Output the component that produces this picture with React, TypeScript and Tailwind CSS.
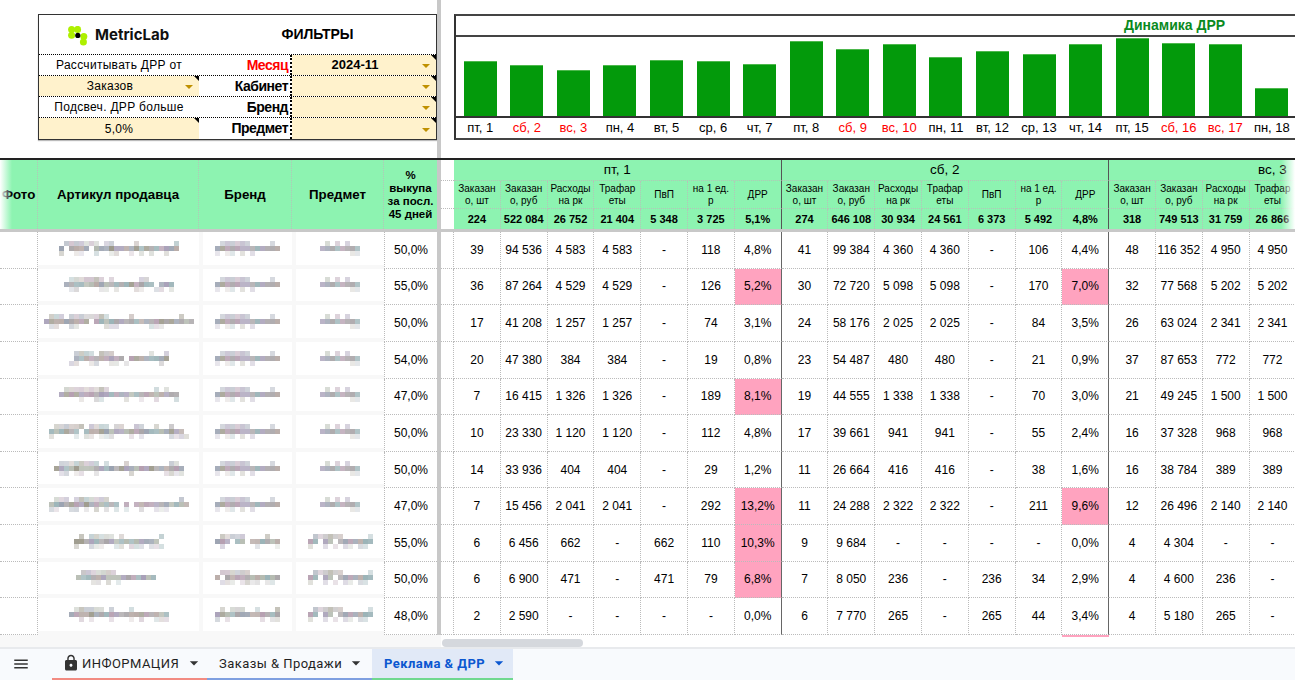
import React from "react";
import { MdArrowDropDown, MdLock, MdMenu } from "react-icons/md";

const DAY_LABELS = ["пт, 1", "сб, 2", "вс, 3", "пн, 4", "вт, 5", "ср, 6", "чт, 7", "пт, 8", "сб, 9", "вс, 10", "пн, 11", "вт, 12", "ср, 13", "чт, 14", "пт, 15", "сб, 16", "вс, 17", "пн, 18"];
const BAR_HEIGHTS = [55, 51, 46, 51, 56, 55, 52, 75, 67, 72, 59, 65, 62, 72, 78, 73, 72, 28];
const COL_TITLES = ["Заказан\nо, шт", "Заказан\nо, руб", "Расходы\nна рк", "Трафар\nеты", "ПвП", "на 1 ед.\nр", "ДРР"];

const DAY_1 = [
  ["39", "94 536", "4 583", "4 583", "-", "118", "4,8%"],
  ["36", "87 264", "4 529", "4 529", "-", "126", "5,2%"],
  ["17", "41 208", "1 257", "1 257", "-", "74", "3,1%"],
  ["20", "47 380", "384", "384", "-", "19", "0,8%"],
  ["7", "16 415", "1 326", "1 326", "-", "189", "8,1%"],
  ["10", "23 330", "1 120", "1 120", "-", "112", "4,8%"],
  ["14", "33 936", "404", "404", "-", "29", "1,2%"],
  ["7", "15 456", "2 041", "2 041", "-", "292", "13,2%"],
  ["6", "6 456", "662", "-", "662", "110", "10,3%"],
  ["6", "6 900", "471", "-", "471", "79", "6,8%"],
  ["2", "2 590", "-", "-", "-", "-", "0,0%"],
];
const DAY_2 = [
  ["41", "99 384", "4 360", "4 360", "-", "106", "4,4%"],
  ["30", "72 720", "5 098", "5 098", "-", "170", "7,0%"],
  ["24", "58 176", "2 025", "2 025", "-", "84", "3,5%"],
  ["23", "54 487", "480", "480", "-", "21", "0,9%"],
  ["19", "44 555", "1 338", "1 338", "-", "70", "3,0%"],
  ["17", "39 661", "941", "941", "-", "55", "2,4%"],
  ["11", "26 664", "416", "416", "-", "38", "1,6%"],
  ["11", "24 288", "2 322", "2 322", "-", "211", "9,6%"],
  ["9", "9 684", "-", "-", "-", "-", "0,0%"],
  ["7", "8 050", "236", "-", "236", "34", "2,9%"],
  ["6", "7 770", "265", "-", "265", "44", "3,4%"],
];
const DAY_3 = [
  ["48", "116 352", "4 950", "4 950"],
  ["32", "77 568", "5 202", "5 202"],
  ["26", "63 024", "2 341", "2 341"],
  ["37", "87 653", "772", "772"],
  ["21", "49 245", "1 500", "1 500"],
  ["16", "37 328", "968", "968"],
  ["16", "38 784", "389", "389"],
  ["12", "26 496", "2 140", "2 140"],
  ["4", "4 304", "-", "-"],
  ["4", "4 600", "236", "-"],
  ["4", "5 180", "265", "-"],
];
const TOTALS = [
  ["224", "522 084", "26 752", "21 404", "5 348", "3 725", "5,1%"],
  ["274", "646 108", "30 934", "24 561", "6 373", "5 492", "4,8%"],
  ["318", "749 513", "31 759", "26 866"],
];
const PERCENTS = ["50,0%", "55,0%", "50,0%", "54,0%", "47,0%", "50,0%", "50,0%", "47,0%", "55,0%", "50,0%", "48,0%"];
const ARTICLE_WIDTHS = [120, 110, 150, 100, 120, 140, 130, 140, 90, 85, 100];

const GRID = "grid grid-cols-[38px_161px_93px_92px_53px_4px_13px_repeat(25,46.8px)]";
const PALETTE = ["#a9a5a8", "#b9aca8", "#9d9a8c", "#a8a0b8", "#9cb4b8", "#b4bab0", "#b59fb0", "#9aa2b0"];

// blurred-out product names in the source: a pixel mosaic shaped like a line of text
function Mosaic({ width, seed }: { width: number; seed: number }) {
  const cols = Math.round(width / 5);
  const cells: React.ReactNode[] = [];
  let s = seed;
  const next = () => {
    s = (s * 16807) % 2147483647;
    return s / 2147483647;
  };
  const rowOpacity = [0.4, 0.78, 0.22];
  for (let y = 0; y < 3; y++) {
    for (let x = 0; x < cols; x++) {
      const hit = next();
      const tone = PALETTE[Math.floor(next() * PALETTE.length)];
      const shade = next() * 0.22;
      const skip = y === 1 ? 0.04 : y === 2 ? 0.55 : x / cols < 0.42 ? 0.12 : 0.85;
      if (hit < skip) continue;
      cells.push(<rect key={`${x}-${y}`} x={x * 5} y={y * 5} width={5} height={5} fill={tone} opacity={rowOpacity[y] + shade} />);
    }
  }
  return (
    <svg width={cols * 5} height={15} shapeRendering="crispEdges" className="block">
      {cells}
    </svg>
  );
}

function NoteMark() {
  return <span className="absolute right-0 top-0 border-l-[5px] border-t-[5px] border-l-transparent border-t-black" />;
}

function DropCaret() {
  return <span className="absolute right-[6px] top-1/2 -translate-y-[1px] border-x-[4px] border-t-[4px] border-x-transparent border-t-[#bf9000]" />;
}

function Logo() {
  return (
    <svg width="20" height="20" viewBox="0 0 20 20">
      <g fill="#aef000">
        <circle cx="3.6" cy="3.6" r="3.5" />
        <circle cx="9.6" cy="3.4" r="3.5" />
        <circle cx="3.6" cy="9.2" r="3.5" />
        <circle cx="15.8" cy="10.4" r="3.5" />
        <circle cx="15.4" cy="16" r="3.5" />
      </g>
      <circle cx="9.8" cy="9.4" r="2.6" fill="#000" />
    </svg>
  );
}

function FilterPanel() {
  return (
    <div className="ml-[38px] mt-[14px] h-[126px] w-[399px] border border-[#333] shadow-[0_1px_1px_#bbb] font-['Liberation_Sans',sans-serif] text-black">
      <div className="flex h-[40px] border-b border-dotted border-black">
        <div className="flex w-[160px] items-center gap-[7px] pl-[29px] pt-[2px]">
          <Logo />
          <span className="font-['Inter',sans-serif] text-[15px] font-bold text-[#111]">MetricLab</span>
        </div>
        <div className="flex flex-1 items-center justify-center text-[14px] font-bold">ФИЛЬТРЫ</div>
      </div>
      <FilterRow left="Рассчитывать ДРР от" label="Месяц" value="2024-11" red />
      <FilterRow left="Заказов" label="Кабинет" leftDrop />
      <FilterRow left="Подсвеч. ДРР больше" label="Бренд" />
      <FilterRow left="5,0%" label="Предмет" leftFill last />
    </div>
  );
}

function FilterRow({ left, label, value, red, leftDrop, leftFill, last }: { left: string; label: string; value?: string; red?: boolean; leftDrop?: boolean; leftFill?: boolean; last?: boolean }) {
  const filled = leftDrop || leftFill;
  return (
    <div className={last ? "flex h-[21px]" : "flex h-[21px] border-b border-dotted border-black"}>
      <div className={`relative flex w-[160px] items-center justify-center text-[12px] tracking-[0.3px] ${filled ? "bg-[#fff2cc]" : ""} ${leftDrop ? "pr-[18px]" : ""}`}>
        {left}
        {filled && <NoteMark />}
        {leftDrop && <DropCaret />}
      </div>
      <div className={red ? "flex w-[93px] items-center justify-end border-r-2 border-dotted border-black pr-[2px] text-[14px] font-bold tracking-[-0.5px] text-[#ff0000]" : "flex w-[93px] items-center justify-end border-r-2 border-dotted border-black pr-[2px] text-[14px] font-bold tracking-[-0.5px]"}>
        {label}
      </div>
      <div className="relative flex flex-1 items-center justify-center bg-[#fff2cc] pr-[18px] text-[13px] font-bold">
        {value}
        <NoteMark />
        <DropCaret />
      </div>
    </div>
  );
}

function DynamicsChart() {
  return (
    <div className="mt-[14px] h-[126px] flex-1 border-y-2 border-l-2 border-y-[#444] border-l-[#333] font-['Liberation_Sans',sans-serif]">
      <div className="h-[21px] border-b-2 border-[#444] pl-[668px] text-[14px] font-bold leading-[19px] text-[#0a8a1e]">Динамика ДРР</div>
      <div className="flex h-[81px] items-end border-b-2 border-[#333] pl-[1px]">
        {BAR_HEIGHTS.map((h, i) => (
          <div key={i} className="flex w-[46.57px] shrink-0 justify-center">
            <div className="w-[33px] border-t border-[#4db84d] bg-[#039a0b]" style={{ height: h }} />
          </div>
        ))}
      </div>
      <div className="flex h-[20px] items-center pl-[1px] text-[13px]">
        {DAY_LABELS.map((d) => (
          <div key={d} className={d.startsWith("сб") || d.startsWith("вс") ? "w-[46.57px] shrink-0 whitespace-nowrap text-center text-[#ff0000]" : "w-[46.57px] shrink-0 whitespace-nowrap text-center text-black"}>
            {d}
          </div>
        ))}
      </div>
    </div>
  );
}

function HeaderRow() {
  const headLeft = "row-span-3 flex items-center justify-center border-r border-dotted border-[#b4c4b8] text-[13.3px] font-bold";
  const days = ["пт, 1", "сб, 2", "вс, 3"];
  const dayCols = [7, 7, 4];
  return (
    <div className="relative">
      <div className={`${GRID} h-[71px] grid-rows-[21px_28px_20px] border-t-2 border-[#222] bg-[#8df3b1] font-['Liberation_Sans',sans-serif] text-black`}>
        <div className={headLeft}>Фото</div>
        <div className={headLeft}>Артикул продавца</div>
        <div className={headLeft}>Бренд</div>
        <div className={headLeft}>Предмет</div>
        <div className="row-span-3 flex items-center justify-center text-center text-[11.5px] font-bold leading-[13px]">
          %<br />выкупа<br />за посл.<br />45 дней
        </div>
        <div className="row-span-3 bg-[#c8c8c8]" />
        <div className="border-b border-dotted border-[#bbb] bg-white" />
        {days.map((d) => (
          <div key={d} className="col-span-7 flex items-center justify-center border-b border-r border-b-[#b4c4b8] border-r-[#555] text-[13.5px] [border-bottom-style:dotted]">
            {d}
          </div>
        ))}
        <div className="col-start-7 border-b border-dotted border-[#bbb] bg-white" />
        {days.map((d, di) =>
          COL_TITLES.slice(0, dayCols[di]).map((t, i) => (
            <div key={`${d}-${i}`} className={i === 6 ? "flex items-center justify-center whitespace-pre-line border-b border-r border-b-[#b4c4b8] border-r-[#555] text-center text-[10px] leading-[12px] [border-bottom-style:dotted]" : "flex items-center justify-center whitespace-pre-line border-b border-r border-dotted border-[#b4c4b8] text-center text-[10px] leading-[12px]"}>
              {t}
            </div>
          ))
        )}
        <div className="col-start-7 bg-white" />
        {days.map((d, di) =>
          TOTALS[di].map((v, i) => (
            <div key={`${d}-${i}`} className={i === 6 ? "flex items-center justify-center border-r border-[#555] text-[11px] font-bold" : "flex items-center justify-center border-r border-dotted border-[#b4c4b8] text-[11px] font-bold"}>
              {v}
            </div>
          ))
        )}
      </div>
      <div className="h-[3px] bg-[#c8c8c8]" />
      <div className="absolute left-0 top-[2px] h-[69px] w-[12px] bg-gradient-to-r from-white to-transparent" />
      <div className="absolute right-0 top-[2px] h-[69px] w-[14px] bg-gradient-to-l from-white to-transparent" />
    </div>
  );
}

function DataCell({ value, col }: { value: string; col: number }) {
  const base = "flex items-center justify-center border-b border-r border-dotted border-b-[#bbb] text-[12px] text-black";
  if (col === 6) {
    const hot = parseFloat(value.replace(",", ".")) > 5;
    return <div className={`${base} border-r-[#666] [border-right-style:solid] ${hot ? "bg-[#ffa3bf]" : ""}`}>{value}</div>;
  }
  return <div className={`${base} border-r-[#bbb]`}>{value}</div>;
}

function DataRow({ index }: { index: number }) {
  const isGoods = index >= 8;
  return (
    <div className={`${GRID} h-[36.64px] font-['Liberation_Sans',sans-serif]`}>
      <div className="border-b border-r border-dotted border-[#bbb]" />
      <div className="flex items-center justify-center border-b-4 border-[#f8f8f8]">
        <Mosaic width={ARTICLE_WIDTHS[index]} seed={index * 97 + 13} />
      </div>
      <div className="flex items-center justify-center border-b-4 border-l-4 border-[#f8f8f8]">
        <Mosaic width={65} seed={isGoods ? 4242 + index : 777} />
      </div>
      <div className="flex items-center justify-center border-b-4 border-l-4 border-[#f8f8f8]">
        <Mosaic width={isGoods ? 65 : 40} seed={isGoods ? 991 : 555} />
      </div>
      <div className="flex items-center justify-center border-b border-l border-dotted border-[#bbb] text-[12px] text-black">{PERCENTS[index]}</div>
      <div className="bg-[#c8c8c8]" />
      <div className="border-b border-r border-dotted border-[#bbb]" />
      {DAY_1[index].map((v, i) => (
        <DataCell key={`a${i}`} value={v} col={i} />
      ))}
      {DAY_2[index].map((v, i) => (
        <DataCell key={`b${i}`} value={v} col={i} />
      ))}
      {DAY_3[index].map((v, i) => (
        <DataCell key={`c${i}`} value={v} col={i} />
      ))}
    </div>
  );
}

export default function App() {
  return (
    <div className="flex h-[680px] w-[1295px] flex-col overflow-hidden bg-white">
      <div className="flex h-[158px]">
        <div className="w-[437px] shrink-0">
          <FilterPanel />
        </div>
        <div className="w-[4px] shrink-0 bg-[#c8c8c8]" />
        <div className="w-[13px] shrink-0" />
        <DynamicsChart />
      </div>
      <HeaderRow />
      <div>
        {PERCENTS.map((_, i) => (
          <DataRow key={i} index={i} />
        ))}
      </div>
      <div className="relative flex h-[14px] border-b-2 border-[#e8eaed]">
        <div className="w-[441px] bg-[#f8f8f8]" />
        <div className="pl-[1px] pt-[4px]">
          <div className="h-[8px] w-[141px] rounded-full bg-[#d5d8dd]" />
        </div>
        <div className="absolute left-[1062px] top-0 h-[2px] w-[47px] bg-[#ffa3bf]" />
      </div>
      <div className="flex flex-1 items-center bg-[#f8fafd] pl-[12px] font-['Roboto',sans-serif] text-[13px] tracking-[0.45px]">
        <MdMenu className="mr-[22px] text-[18px] text-[#333]" />
        <div className="flex h-full w-[155px] items-center border-b-2 border-[#f28b82] pl-[10px] text-[#1f1f1f]">
          <MdLock className="mr-[2px] text-[18px] text-[#333]" />
          <span>ИНФОРМАЦИЯ</span>
          <MdArrowDropDown className="ml-[5px] text-[20px] text-[#333]" />
        </div>
        <div className="flex h-full w-[165px] items-center border-b-2 border-[#7f9fe0] pl-[12px] text-[#1f1f1f]">
          <span>Заказы &amp; Продажи</span>
          <MdArrowDropDown className="ml-[4px] text-[20px] text-[#333]" />
        </div>
        <div className="flex h-full w-[141px] items-center border-b-2 border-[#6fd88f] bg-[#e1e9f7] pl-[12px] font-bold text-[#0b57d0]">
          <span>Реклама &amp; ДРР</span>
          <MdArrowDropDown className="ml-[4px] text-[20px]" />
        </div>
      </div>
    </div>
  );
}
